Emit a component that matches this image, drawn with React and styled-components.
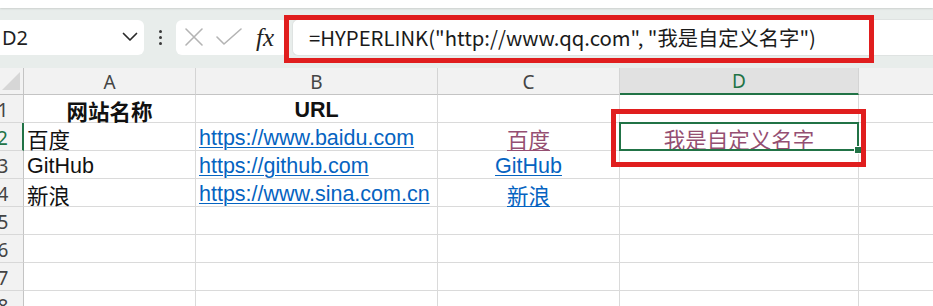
import React from "react";
import styled, { createGlobalStyle, css } from "styled-components";

const GlobalStyle = createGlobalStyle`
  html, body { margin: 0; padding: 0; background: #ffffff; }
  body { overflow: hidden; font-family: "Noto Sans", "Noto Sans CJK SC", sans-serif; }
`;

const GREEN = "#217346";
const RED = "#e01e1e";
const LINK = "#0563c1";
const VISITED = "#954f72";
const CELL_FONT = `"Liberation Sans", "Noto Sans CJK SC", sans-serif`;

const Page = styled.div`
  position: relative;
  width: 933px;
  height: 306px;
  overflow: hidden;
  display: flex;
  flex-direction: column;
  & > * { flex-shrink: 0; }
`;

const TopStrip = styled.div`
  height: 8px;
  background: #ffffff;
  box-shadow: 0 1px 2px rgba(0, 0, 0, 0.12);
  position: relative;
  z-index: 1;
`;

const FormulaToolbar = styled.div`
  height: 60px;
  background: #e8edeb;
  display: flex;
  align-items: center;
  padding-bottom: 2px;
  box-sizing: border-box;
`;

const NameBox = styled.div`
  margin-left: -12px;
  width: 156px;
  height: 35px;
  box-sizing: border-box;
  background: #fff;
  border-radius: 6px;
  display: flex;
  align-items: center;
  justify-content: space-between;
  padding: 0 6px 0 14px;
  font-family: "Noto Sans", sans-serif;
  font-size: 20px;
  color: #1f1f1f;
`;

const Dots = styled.div`
  width: 32px;
  display: flex;
  flex-direction: column;
  align-items: center;
  gap: 3px;
  span {
    width: 3px;
    height: 3px;
    border-radius: 50%;
    background: #3a3a3a;
  }
`;

const ButtonBox = styled.div`
  width: 112px;
  height: 35px;
  box-sizing: border-box;
  background: #fff;
  border-radius: 6px;
  display: flex;
  align-items: center;
  padding-left: 8px;
  gap: 12px;
`;

const FxLabel = styled.span`
  font-family: "Liberation Serif", "DejaVu Serif", serif;
  font-style: italic;
  font-size: 25px;
  color: #222;
  margin-left: 2px;
  line-height: 1;
`;

const FormulaInput = styled.div`
  flex: 1;
  margin-left: 4px;
  height: 37px;
  box-sizing: border-box;
  background: #fff;
  border-radius: 6px 0 0 6px;
  border: 1px solid #dfe3e2;
  border-right: none;
  display: flex;
  align-items: center;
  padding-left: 16px;
  font-family: "Noto Sans CJK SC", "Noto Sans", sans-serif;
  font-size: 20.3px;
  color: #1a1a1a;
  white-space: nowrap;
`;

const Sheet = styled.div`
  margin-left: -17px;
  width: 1150px;
  display: grid;
  grid-template-columns: 41px 172px 242px 182px 239px 240px;
  grid-template-rows: 27px;
  grid-auto-rows: 28px;
`;

const HeaderCell = styled.div`
  box-sizing: border-box;
  background: ${(p) => (p.$active ? "#e1e1e1" : "#f2f2f2")};
  border-right: 1px solid #d4d4d4;
  border-bottom: ${(p) => (p.$active ? `2px solid ${GREEN}` : "1px solid #c4c4c4")};
  display: flex;
  align-items: center;
  justify-content: center;
  padding-top: 1px;
  font-family: "Noto Sans", sans-serif;
  font-size: 19px;
  color: ${(p) => (p.$active ? GREEN : "#444")};
  position: relative;
`;

const Corner = styled(HeaderCell)`
  border-right: 1px solid #c4c4c4;
  &::after {
    content: "";
    position: absolute;
    right: 3px;
    bottom: 4px;
    width: 0;
    height: 0;
    border-style: solid;
    border-width: 0 0 18px 18px;
    border-color: transparent transparent #d6d6d6 transparent;
  }
`;

const RowHead = styled.div`
  box-sizing: border-box;
  background: #f2f2f2;
  border-right: ${(p) => (p.$active ? `2px solid ${GREEN}` : "1px solid #c4c4c4")};
  border-bottom: 1px solid #d8d8d8;
  display: flex;
  align-items: center;
  justify-content: center;
  padding-top: 2px;
  font-family: "Noto Sans", sans-serif;
  font-size: 19px;
  color: ${(p) => (p.$active ? GREEN : "#444")};
`;

const Cell = styled.div`
  box-sizing: border-box;
  position: relative;
  border-right: 1px solid #dadada;
  border-bottom: 1px solid #dadada;
  display: flex;
  align-items: center;
  justify-content: ${(p) => (p.$align === "center" ? "center" : "flex-start")};
  padding: 3px 0 0 ${(p) => (p.$align === "center" ? "0" : "3px")};
  font-family: ${CELL_FONT};
  font-size: 21.5px;
  font-weight: ${(p) => (p.$bold ? 700 : 400)};
  color: #111;
  white-space: nowrap;
  ${(p) =>
    p.$selected &&
    css`
      &::after {
        content: "";
        position: absolute;
        left: -1px;
        top: -1px;
        right: -1px;
        bottom: -1px;
        border: 2px solid ${GREEN};
      }
      &::before {
        content: "";
        position: absolute;
        right: -3px;
        bottom: -3px;
        width: 6px;
        height: 6px;
        background: ${GREEN};
        z-index: 2;
        box-shadow: 0 0 0 1px #fff;
      }
    `}
`;

const Link = styled.span`
  color: ${(p) => (p.$visited ? VISITED : LINK)};
  text-decoration: underline;
  text-decoration-thickness: 1px;
  text-underline-offset: 2px;
`;

const Annotation = styled.div`
  position: absolute;
  border: 5px solid ${RED};
  box-sizing: border-box;
  pointer-events: none;
  z-index: 5;
`;

const XIcon = () => (
  <svg width="20" height="20" viewBox="0 0 20 20" fill="none" stroke="#b4b4b4" strokeWidth="1.6" strokeLinecap="round">
    <path d="M2 2 L18 18 M18 2 L2 18" />
  </svg>
);

const CheckIcon = () => (
  <svg width="26" height="18" viewBox="0 0 26 18" fill="none" stroke="#b4b4b4" strokeWidth="1.6" strokeLinecap="round" strokeLinejoin="round">
    <path d="M1 9 L8 16 L25 1" />
  </svg>
);

const Chevron = () => (
  <svg width="16" height="10" viewBox="0 0 16 10" fill="none" stroke="#2a2a2a" strokeWidth="1.7" strokeLinecap="round" strokeLinejoin="round">
    <path d="M1.5 1.5 L8 8 L14.5 1.5" />
  </svg>
);

const columns = ["A", "B", "C", "D", "E"];

const rows = [
  [
    { text: "网站名称", align: "center", bold: true },
    { text: "URL", align: "center", bold: true },
    {},
    {},
    {},
  ],
  [
    { text: "百度" },
    { text: "https://www.baidu.com", link: true },
    { text: "百度", link: true, visited: true, align: "center" },
    { text: "我是自定义名字", link: true, visited: true, align: "center", selected: true },
    {},
  ],
  [
    { text: "GitHub" },
    { text: "https://github.com", link: true },
    { text: "GitHub", link: true, align: "center" },
    {},
    {},
  ],
  [
    { text: "新浪" },
    { text: "https://www.sina.com.cn", link: true },
    { text: "新浪", link: true, align: "center" },
    {},
    {},
  ],
  [{}, {}, {}, {}, {}],
  [{}, {}, {}, {}, {}],
  [{}, {}, {}, {}, {}],
  [{}, {}, {}, {}, {}],
];

export default function App() {
  return (
    <>
      <GlobalStyle />
      <Page>
        <TopStrip />
        <FormulaToolbar>
          <NameBox>
            <span>D2</span>
            <Chevron />
          </NameBox>
          <Dots>
            <span />
            <span />
            <span />
          </Dots>
          <ButtonBox>
            <XIcon />
            <CheckIcon />
            <FxLabel>fx</FxLabel>
          </ButtonBox>
          <FormulaInput>=HYPERLINK("http://www.qq.com", "我是自定义名字")</FormulaInput>
        </FormulaToolbar>
        <Sheet>
          <Corner />
          {columns.map((c) => (
            <HeaderCell key={c} $active={c === "D"}>
              {c}
            </HeaderCell>
          ))}
          {rows.map((row, ri) => (
            <React.Fragment key={ri}>
              <RowHead $active={ri === 1}>{ri + 1}</RowHead>
              {row.map((cell, ci) => (
                <Cell
                  key={ci}
                  $align={cell.align}
                  $bold={cell.bold}
                  $selected={cell.selected}
                >
                  {cell.link ? <Link $visited={cell.visited}>{cell.text}</Link> : cell.text}
                </Cell>
              ))}
            </React.Fragment>
          ))}
        </Sheet>
        <Annotation style={{ left: 284, top: 15, width: 590, height: 48 }} />
        <Annotation style={{ left: 611, top: 109, width: 255, height: 58 }} />
      </Page>
    </>
  );
}
